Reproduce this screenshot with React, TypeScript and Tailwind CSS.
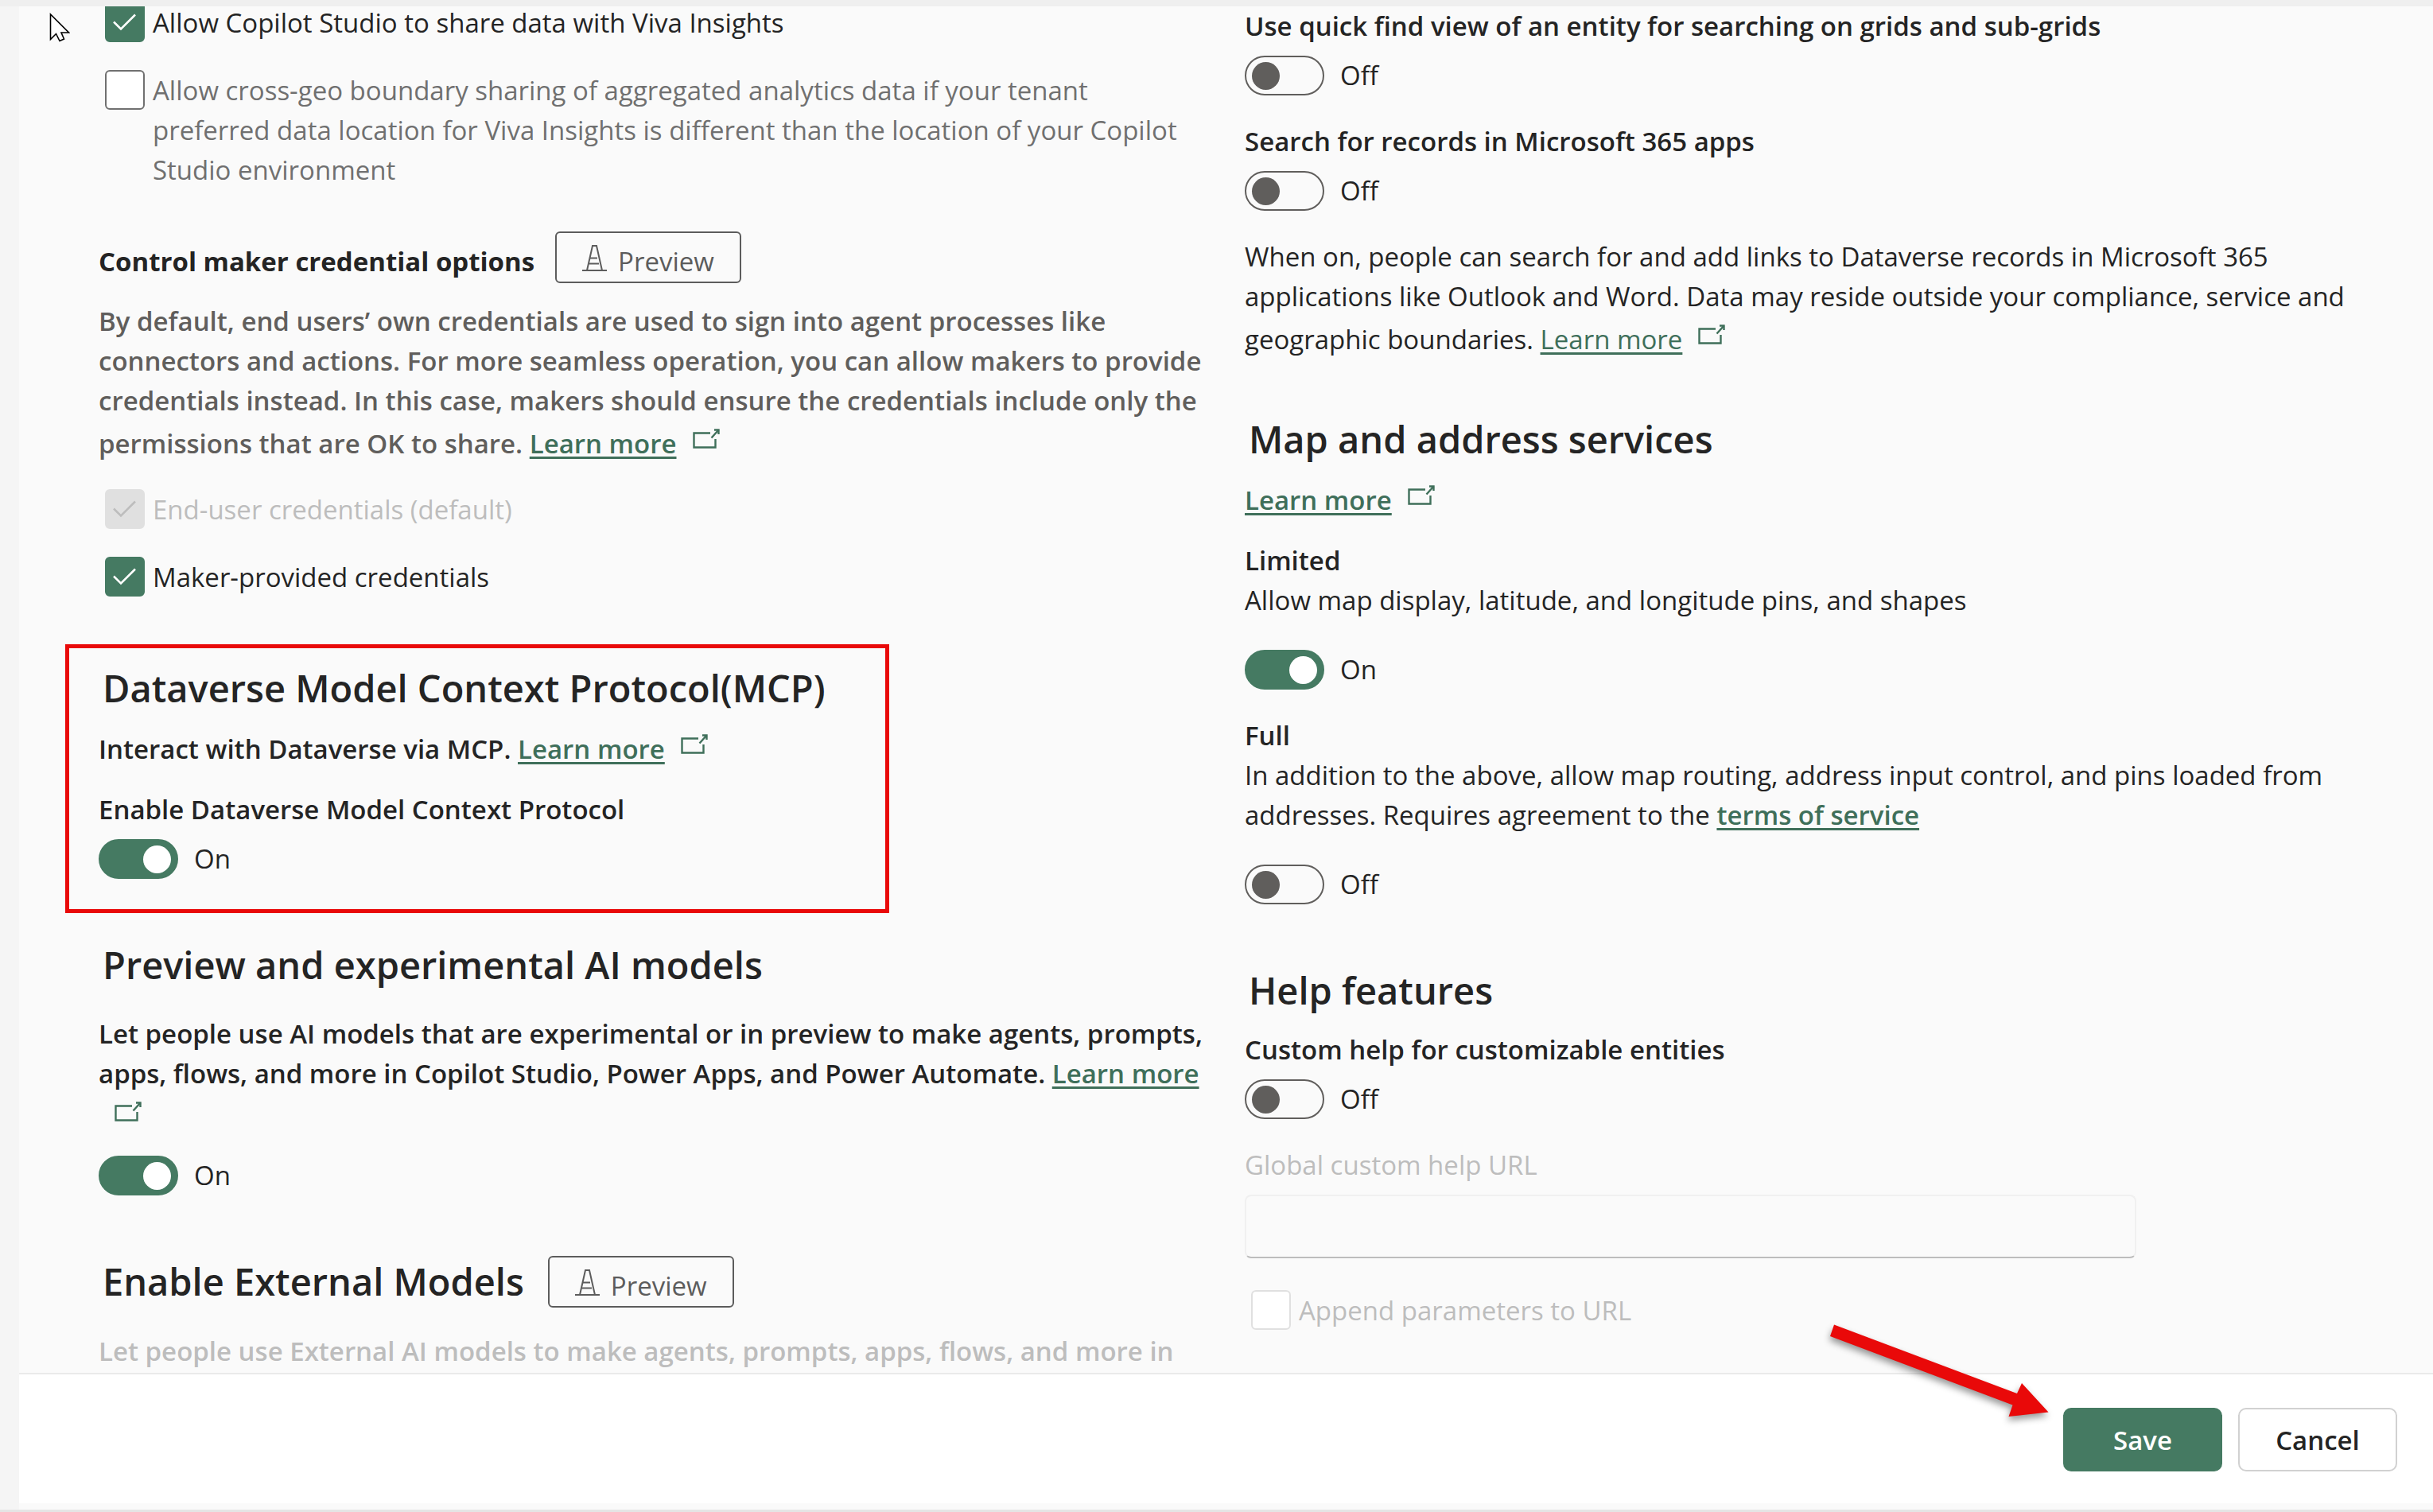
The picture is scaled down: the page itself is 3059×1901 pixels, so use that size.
import { useId, useState, type ReactNode } from "react";

function ExternalIcon() {
  return (
    <svg
      viewBox="0 0 34 25"
      className="mb-[6px] ml-5 mt-[10px] inline-block h-[25px] w-[34px] align-baseline"
      fill="none"
      stroke="#3f6f5a"
      strokeWidth="2.4"
      aria-hidden="true"
    >
      <path d="M22 5.500H1.500V23.500H28.500V13" />
      <path d="M23.500 11.500L32.500 1.500" />
      <path d="M27 1.500H32.500V7" />
    </svg>
  );
}

function ExternalLink({ children }: { children: ReactNode }) {
  return (
    <>
      <a href="#" className="text-[#3f6f5a] underline decoration-[3px] underline-offset-[4px]">
        {children}
      </a>
      <wbr />
      <ExternalIcon />
    </>
  );
}

function PreviewTag() {
  return (
    <span className="inline-flex items-baseline gap-[14px] rounded-md border-2 border-[#5c5c5c] px-8 pt-[11px] font-normal text-[33px] leading-[50px] text-[#5c5c5c]">
      <svg viewBox="0 0 31 33" className="h-[33px] w-[31px]" fill="none" stroke="currentColor" strokeWidth="2" aria-hidden="true">
        <path d="M0 32H31" />
        <path d="M6 32L13 1H18L25 32" />
        <path d="M10 16.500H19" />
        <path d="M8.500 23.500H21" />
      </svg>
      Preview
    </span>
  );
}

function Checkbox({ label, checked = false, disabled = false, muted = false }: { label: string; checked?: boolean; disabled?: boolean; muted?: boolean }) {
  const id = useId();
  const [on, setOn] = useState(checked);
  return (
    <div className="ml-2 flex items-start gap-[10px] pr-6">
      <span className="relative size-[50px] shrink-0">
        <input
          id={id}
          type="checkbox"
          checked={on}
          disabled={disabled}
          onChange={() => setOn(!on)}
          className={`block size-[50px] appearance-none rounded-md border-2 bg-white ${
            disabled ? "border-[#e0e0e0] checked:bg-[#e0e0e0]" : "border-[#707070] checked:border-[#457a62] checked:bg-[#457a62]"
          }`}
        />
        {on && (
          <svg
            viewBox="0 0 50 50"
            className={`pointer-events-none absolute inset-0 ${disabled ? "text-[#bdbdbd]" : "text-white"}`}
            fill="none"
            stroke="currentColor"
            strokeWidth="2.5"
            aria-hidden="true"
          >
            <path d="M11 24.500L20 33.500L38 15.500" />
          </svg>
        )}
      </span>
      <label htmlFor={id} className={`pt-px ${disabled ? "text-[#bdbdbd]" : muted ? "text-[#707070]" : ""}`}>
        {label}
      </label>
    </div>
  );
}

function Toggle({ name, initial = false }: { name: string; initial?: boolean }) {
  const id = useId();
  const [on, setOn] = useState(initial);
  return (
    <div className="flex items-center gap-5">
      <input
        id={id}
        type="checkbox"
        role="switch"
        aria-label={name}
        checked={on}
        onChange={() => setOn(!on)}
        className="flex h-[50px] w-[100px] appearance-none items-center rounded-full border-2 border-[#605e5c] px-[7px] before:size-[35px] before:rounded-full before:bg-[#605e5c] before:content-[''] checked:justify-end checked:border-[#457a62] checked:bg-[#457a62] checked:before:bg-white"
      />
      <label htmlFor={id}>{on ? "On" : "Off"}</label>
    </div>
  );
}

function Heading({ children }: { children: ReactNode }) {
  return <h2 className="pl-[5px] text-[47px] font-semibold leading-[64px]">{children}</h2>;
}

function Pointer() {
  return (
    <svg viewBox="0 0 26 37" className="absolute left-[62px] top-4 h-[37px] w-[26px]" fill="#fff" stroke="#000" strokeWidth="1.6" aria-hidden="true">
      <path d="M1.500 2V33.500L8.500 26.500L13 35.500L18.500 33L15 25H24.500Z" />
    </svg>
  );
}

function RedArrow() {
  return (
    <svg viewBox="0 0 320 160" className="pointer-events-none absolute bottom-[91px] right-[449px] h-[160px] w-[320px] drop-shadow-[-1px_5px_4px_rgba(0,0,0,0.4)]" aria-hidden="true">
      <path d="M16 15.500L246 102L252 89L285.500 125.500L235.500 131L240.500 116.500L11 30Z" fill="#e90909" />
    </svg>
  );
}

export default function App() {
  return (
    <div className="relative flex h-screen flex-col overflow-hidden bg-[#fafafa] font-['Open_Sans',sans-serif] text-[33px] leading-[50px] text-[#242424]">
      <div className="h-2 shrink-0 bg-[#efefef]" />
      <div className="flex min-h-0 flex-1">
        <div className="w-6 shrink-0 bg-[#f5f5f5]" />
        <div className="flex min-w-0 flex-1 flex-col">
          <main className="grid min-h-0 flex-1 grid-cols-2 overflow-hidden pl-[100px] pr-[53px]">
            <div className="-mt-[5px] pr-10">
              <Checkbox label="Allow Copilot Studio to share data with Viva Insights" checked />
              <div className="mt-[34px]">
                <Checkbox
                  muted
                  label="Allow cross-geo boundary sharing of aggregated analytics data if your tenant preferred data location for Viva Insights is different than the location of your Copilot Studio environment"
                />
              </div>

              <div className="mt-[52px] flex items-baseline gap-[26px]">
                <h3 className="font-bold">Control maker credential options</h3>
                <PreviewTag />
              </div>
              <p className="mt-[23px] font-semibold text-[#605e5c]">
                By default, end users’ own credentials are used to sign into agent processes like connectors and actions. For more seamless operation, you can
                allow makers to provide credentials instead. In this case, makers should ensure the credentials include only the permissions that are OK to
                share. <ExternalLink>Learn more</ExternalLink>
              </p>
              <div className="mt-8">
                <Checkbox label="End-user credentials (default)" checked disabled />
              </div>
              <div className="mt-[34px]">
                <Checkbox label="Maker-provided credentials" checked />
              </div>

              <section className="-ml-[42px] mt-[59px] w-[1036px] border-[5px] border-[#e90909] pb-[38px] pl-[37px] pt-[18px]">
                <Heading>Dataverse Model Context Protocol(MCP)</Heading>
                <p className="mt-4 font-semibold">
                  Interact with Dataverse via MCP. <ExternalLink>Learn more</ExternalLink>
                </p>
                <h3 className="mb-3 mt-[26px] font-semibold">Enable Dataverse Model Context Protocol</h3>
                <Toggle name="Enable Dataverse Model Context Protocol" initial />
              </section>

              <section className="mt-[33px]">
                <Heading>Preview and experimental AI models</Heading>
                <p className="mb-6 mt-[30px] font-semibold">
                  Let people use AI models that are experimental or in preview to make agents, prompts, apps, flows, and more in Copilot Studio, Power Apps,
                  and Power Automate. <ExternalLink>Learn more</ExternalLink>
                </p>
                <Toggle name="Preview and experimental AI models" initial />
              </section>

              <section className="mt-[76px]">
                <div className="flex items-baseline gap-[30px]">
                  <Heading>Enable External Models</Heading>
                  <PreviewTag />
                </div>
                <p className="mt-[30px] font-semibold text-[#bdbdbd]">Let people use External AI models to make agents, prompts, apps, flows, and more in</p>
              </section>
            </div>

            <div className="pr-10">
              <h3 className="mb-3 font-semibold">Use quick find view of an entity for searching on grids and sub-grids</h3>
              <Toggle name="Use quick find view of an entity" />
              <h3 className="mb-3 mt-[33px] font-semibold">Search for records in Microsoft 365 apps</h3>
              <Toggle name="Search for records in Microsoft 365 apps" />
              <p className="mt-[33px]">
                When on, people can search for and add links to Dataverse records in Microsoft 365 applications like Outlook and Word. Data may reside outside
                your compliance, service and geographic boundaries. <ExternalLink>Learn more</ExternalLink>
              </p>

              <section className="mt-[68px]">
                <Heading>Map and address services</Heading>
                <p className="mt-4 font-semibold">
                  <ExternalLink>Learn more</ExternalLink>
                </p>
                <h3 className="mt-[26px] font-semibold">Limited</h3>
                <p className="mb-[37px]">Allow map display, latitude, and longitude pins, and shapes</p>
                <Toggle name="Limited" initial />
                <h3 className="mt-[33px] font-semibold">Full</h3>
                <p className="mb-[37px]">
                  In addition to the above, allow map routing, address input control, and pins loaded from addresses. Requires agreement to the{" "}
                  <a href="#" className="font-semibold text-[#3f6f5a] underline decoration-[3px] underline-offset-[4px]">
                    terms of service
                  </a>
                </p>
                <Toggle name="Full" />
              </section>

              <section className="mt-[76px]">
                <Heading>Help features</Heading>
                <h3 className="mb-3 mt-[18px] font-semibold">Custom help for customizable entities</h3>
                <Toggle name="Custom help for customizable entities" />
                <label htmlFor="help-url" className="mb-3 mt-[33px] block text-[#bdbdbd]">
                  Global custom help URL
                </label>
                <input
                  id="help-url"
                  type="text"
                  disabled
                  className="mb-10 block h-20 w-4/5 rounded-lg border-2 border-[#f0f0f0] border-b-[#bdbdbd] bg-transparent px-6"
                />
                <Checkbox label="Append parameters to URL" disabled />
              </section>
            </div>
          </main>

          <footer className="flex shrink-0 justify-end gap-5 border-t-2 border-[#eaeaea] bg-white pb-10 pr-[45px] pt-[42px] font-semibold">
            <button type="button" className="h-20 w-[200px] rounded-[10px] bg-[#457a62] pt-0.5 text-white">
              Save
            </button>
            <button type="button" className="h-20 w-[200px] rounded-[10px] border-2 border-[#d1d1d1] bg-white pt-0.5">
              Cancel
            </button>
          </footer>
          <div className="h-2 shrink-0 bg-[#fafafa]" />
        </div>
      </div>
      <div className="h-[3px] shrink-0 bg-[#e5e5e5]" />
      <Pointer />
      <RedArrow />
    </div>
  );
}
